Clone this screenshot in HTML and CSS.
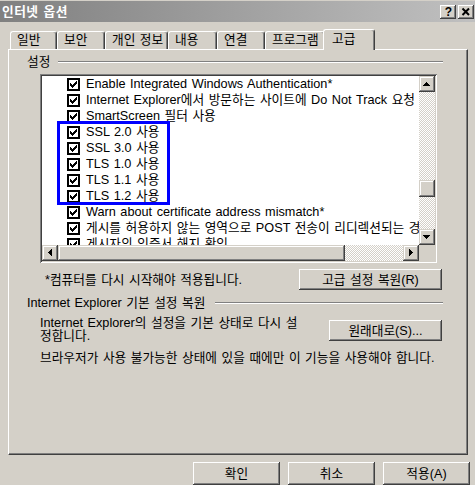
FILE: index.html
```html
<!DOCTYPE html>
<html lang="ko">
<head>
<meta charset="utf-8">
<title>인터넷 옵션</title>
<link rel="stylesheet" href="styles.css">
</head>
<body>
<svg class="defs" width="0" height="0" aria-hidden="true">
  <defs>
    <symbol id="chk" viewBox="0 0 13 13">
      <rect x="0" y="0" width="13" height="13" fill="#000"/>
      <rect x="2" y="2" width="9" height="9" fill="#fff"/>
      <path fill="#000" d="M9 3h1v1h-1z M8 4h2v1h-2z M3 5h1v1h-1z M7 5h3v1h-3z M3 6h2v1h-2z M6 6h3v1h-3z M3 7h5v1h-5z M4 8h3v1h-3z M5 9h1v1h-1z"/>
    </symbol>
    <symbol id="aup" viewBox="0 0 16 16"><path fill="#000" d="M7 6h1v1h-1z M6 7h3v1h-3z M5 8h5v1h-5z M4 9h7v1h-7z"/></symbol>
    <symbol id="adown" viewBox="0 0 16 16"><path fill="#000" d="M4 6h7v1h-7z M5 7h5v1h-5z M6 8h3v1h-3z M7 9h1v1h-1z"/></symbol>
    <symbol id="aleft" viewBox="0 0 16 16"><path fill="#000" d="M6 7h1v1h-1z M7 6h1v3h-1z M8 5h1v5h-1z M9 4h1v7h-1z"/></symbol>
    <symbol id="aright" viewBox="0 0 16 16"><path fill="#000" d="M6 4h1v7h-1z M7 5h1v5h-1z M8 6h1v3h-1z M9 7h1v1h-1z"/></symbol>
  </defs>
</svg>

<div class="titlebar">
  <span class="title">인터넷 옵션</span>
  <div class="tbtns">
    <span class="tbtn help">?</span>
    <span class="tbtn"><svg width="16" height="14" viewBox="0 0 16 14"><path d="M4.5 3.5 L11 10 M11 3.5 L4.5 10" stroke="#000" stroke-width="2" fill="none"/></svg></span>
  </div>
</div>

<div class="tabs">
  <div class="tab w-general">일반</div>
  <div class="tab w-security">보안</div>
  <div class="tab w-privacy">개인 정보</div>
  <div class="tab w-content">내용</div>
  <div class="tab w-conn">연결</div>
  <div class="tab w-prog">프로그램</div>
  <div class="tab sel w-adv">고급</div>
</div>

<div class="panel">
  <div class="ghead gap1"><span>설정</span><i class="rule"></i></div>

  <div class="listbox">
    <div class="lv-main">
      <div class="rows">
        <div class="row"><svg class="cb"><use href="#chk"/></svg><span>Enable Integrated Windows Authentication*</span></div>
        <div class="row"><svg class="cb"><use href="#chk"/></svg><span>Internet Explorer에서 방문하는 사이트에 Do Not Track 요청 보내기</span></div>
        <div class="row"><svg class="cb"><use href="#chk"/></svg><span>SmartScreen 필터 사용</span></div>
        <div class="row"><svg class="cb"><use href="#chk"/></svg><span>SSL 2.0 사용</span></div>
        <div class="row"><svg class="cb"><use href="#chk"/></svg><span>SSL 3.0 사용</span></div>
        <div class="row"><svg class="cb"><use href="#chk"/></svg><span>TLS 1.0 사용</span></div>
        <div class="row"><svg class="cb"><use href="#chk"/></svg><span>TLS 1.1 사용</span></div>
        <div class="row"><svg class="cb"><use href="#chk"/></svg><span>TLS 1.2 사용</span></div>
        <div class="row"><svg class="cb"><use href="#chk"/></svg><span>Warn about certificate address mismatch*</span></div>
        <div class="row"><svg class="cb"><use href="#chk"/></svg><span>게시를 허용하지 않는 영역으로 POST 전송이 리디렉션되는 경우 경고</span></div>
        <div class="row"><svg class="cb"><use href="#chk"/></svg><span>게시자의 인증서 해지 확인</span></div>
      </div>
      <div class="vscroll">
        <div class="sbtn"><svg width="16" height="16"><use href="#aup"/></svg></div>
        <div class="track vtrack"><div class="vthumb"></div></div>
        <div class="sbtn"><svg width="16" height="16"><use href="#adown"/></svg></div>
      </div>
    </div>
    <div class="hrow">
      <div class="hscroll">
        <div class="sbtn"><svg width="16" height="16"><use href="#aleft"/></svg></div>
        <div class="track htrack"><div class="hthumb"></div></div>
        <div class="sbtn"><svg width="16" height="16"><use href="#aright"/></svg></div>
      </div>
      <div class="corner"></div>
    </div>
    <div class="hl"></div>
  </div>

  <div class="restart">
    <span class="note">*컴퓨터를 다시 시작해야 적용됩니다.</span>
    <div class="btn btn-reset">고급 설정 복원(R)</div>
  </div>

  <div class="ghead gap2"><span>Internet Explorer 기본 설정 복원</span><i class="rule"></i></div>

  <div class="desc">
    <p>Internet Explorer의 설정을 기본 상태로 다시 설<br>정합니다.</p>
    <div class="btn btn-default">원래대로(S)...</div>
  </div>
  <p class="warn">브라우저가 사용 불가능한 상태에 있을 때에만 이 기능을 사용해야 합니다.</p>
</div>

<div class="footer">
  <div class="btn fbtn">확인</div>
  <div class="btn fbtn">취소</div>
  <div class="btn fbtn">적용(A)</div>
</div>
</body>
</html>
```
FILE: styles.css
```css
* { box-sizing: border-box; }
html, body { margin: 0; padding: 0; }
body {
  width: 475px;
  height: 485px;
  overflow: hidden;
  background: #d4d0c8;
  font-family: "Liberation Sans", "Noto Sans CJK KR", sans-serif;
  font-size: 12.7px;
  word-spacing: 1px;
  color: #000;
}
.defs { position: absolute; width: 0; height: 0; }

/* title bar */
.titlebar {
  height: 22px;
  border-top: 1px solid #d4d0c8;
  background: linear-gradient(to right, #808080, #c0c0c0);
  display: flex;
  align-items: center;
  justify-content: space-between;
  padding: 0 1px 0 2px;
}
.title {
  color: #fff;
  font-weight: bold;
  font-size: 12.7px;
  line-height: 14px;
  letter-spacing: 0.5px;
}
.tbtns { display: flex; gap: 2px; }
.tbtn {
  width: 16px;
  height: 14px;
  background: #d4d0c8;
  box-shadow: inset -1px -1px #404040, inset 1px 1px #fff, inset -2px -2px #808080;
  display: flex;
  align-items: center;
  justify-content: center;
}
.tbtn svg { display: block; }
.help { font-weight: bold; font-size: 12px; line-height: 14px; font-family: "Liberation Sans", sans-serif; padding-left: 1px; }

/* tabs */
.tabs {
  height: 27px;
  display: flex;
  align-items: flex-end;
  padding-left: 10px;
  position: relative;
  z-index: 1;
}
.tab {
  height: 18px;
  padding: 1px 0 0 6px;
  background: #d4d0c8;
  border-top: 1px solid #fff;
  border-left: 1px solid #fff;
  border-right: 1px solid #404040;
  box-shadow: inset -1px 0 #808080;
  border-radius: 3px 3px 0 0;
  line-height: 14px;
  white-space: nowrap;
  flex-shrink: 0;
}
.w-general { width: 47px; }
.w-security { width: 48px; }
.w-privacy { width: 63px; }
.w-content { width: 49px; }
.w-conn { width: 48px; }
.w-prog { width: 60px; }
.w-adv { width: 52px; }
.tab.sel {
  height: 21px;
  margin-left: -2px;
  margin-bottom: -1px;
  padding: 2px 0 0 8px;
}

/* panel */
.panel {
  margin-left: 8px;
  width: 460px;
  height: 406px;
  border: 1px solid;
  border-color: #fff #404040 #404040 #fff;
  box-shadow: inset -1px -1px #808080;
  padding: 5px 24px 0 18px;
}
.ghead {
  display: flex;
  align-items: center;
  height: 14px;
  line-height: 14px;
  white-space: nowrap;
}
.gap1 { gap: 8px; }
.gap2 { gap: 10px; margin-top: 6px; }
.rule {
  flex: 1;
  height: 2px;
  border-top: 1px solid #808080;
  border-bottom: 1px solid #fff;
}

/* list box */
.listbox {
  position: relative;
  margin: 5px 0 0 13px;
  width: 397px;
  height: 189px;
  padding: 2px;
  background: #fff;
  box-shadow: inset 1px 1px #808080, inset -1px -1px #fff, inset 2px 2px #404040, inset -2px -2px #d4d0c8;
  display: flex;
  flex-direction: column;
}
.lv-main { display: flex; height: 169px; }
.rows { flex: 1; overflow: hidden; }
.row {
  height: 16px;
  display: flex;
  align-items: center;
  gap: 6px;
  padding-left: 25px;
  white-space: nowrap;
  line-height: 16px;
}
.cb { width: 13px; height: 13px; flex-shrink: 0; margin-top: 1px; }
.vscroll { width: 16px; display: flex; flex-direction: column; }
.sbtn {
  width: 16px;
  height: 16px;
  flex-shrink: 0;
  background: #d4d0c8;
  box-shadow: inset -1px -1px #404040, inset 1px 1px #d4d0c8, inset -2px -2px #808080, inset 2px 2px #fff;
}
.sbtn svg { display: block; }
.track {
  flex: 1;
  background-color: #d4d0c8;
  background-image: repeating-conic-gradient(#fff 0 25%, #d4d0c8 0 50%);
  background-size: 2px 2px;
}
.vthumb, .hthumb {
  background: #d4d0c8;
  box-shadow: inset -1px -1px #404040, inset 1px 1px #d4d0c8, inset -2px -2px #808080, inset 2px 2px #fff;
}
.vthumb { height: 17px; margin-top: 88px; }
.htrack { display: flex; }
.hthumb { width: 287px; height: 16px; }
.hrow { display: flex; height: 16px; }
.hscroll { flex: 1; display: flex; }
.corner { width: 16px; background: #d4d0c8; }
.hl {
  position: absolute;
  left: 17px;
  top: 47px;
  width: 113px;
  height: 84px;
  border: 3px solid #0000ff;
}

/* buttons */
.btn {
  height: 21px;
  background: #d4d0c8;
  box-shadow: inset -1px -1px #404040, inset 1px 1px #fff, inset -2px -2px #808080;
  display: flex;
  align-items: center;
  justify-content: center;
  white-space: nowrap;
  line-height: 14px;
}
.restart {
  display: flex;
  justify-content: space-between;
  align-items: center;
  margin-top: 6px;
  height: 21px;
}
.note { padding-left: 18px; line-height: 14px; }
.btn-reset { width: 143px; margin-right: 1px; }

.desc {
  display: flex;
  justify-content: space-between;
  margin-top: 7px;
  padding-left: 13px;
  height: 25px;
}
.desc p { margin: 0; line-height: 13px; white-space: nowrap; }
.btn-default { width: 113px; margin-top: 3px; margin-right: 1px; }
.warn { margin: 9px 0 0 13px; line-height: 14px; white-space: nowrap; }

.footer {
  display: flex;
  justify-content: flex-end;
  gap: 8px;
  padding-right: 5px;
  margin-top: 7px;
}
.fbtn { width: 87px; height: 23px; }
```
